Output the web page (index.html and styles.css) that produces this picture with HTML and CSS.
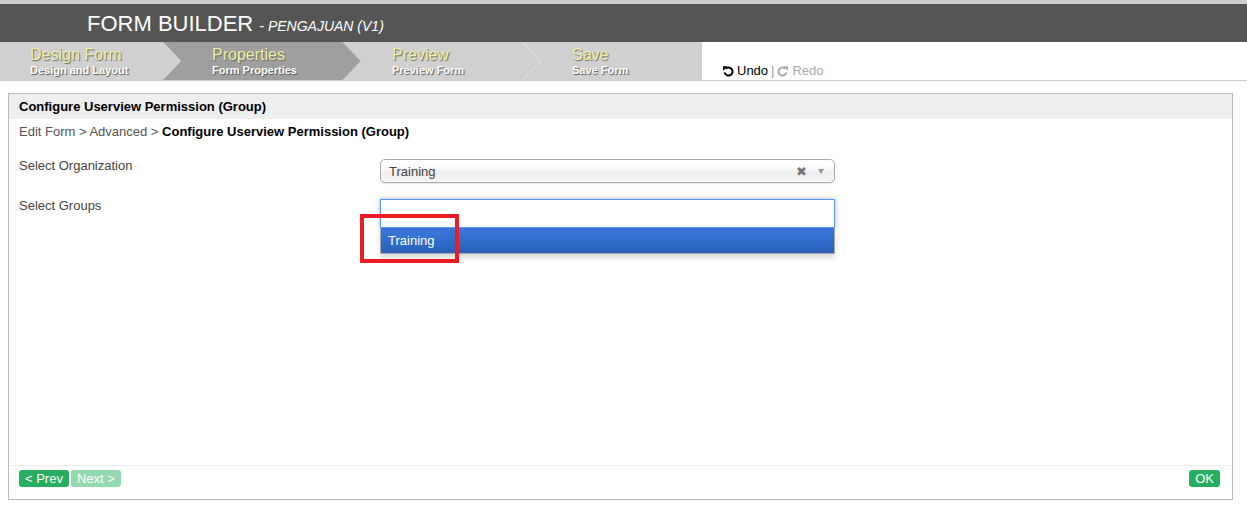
FILE: index.html
```html
<!DOCTYPE html>
<html>
<head>
<meta charset="utf-8">
<link rel="stylesheet" href="styles.css">
</head>
<body>
<header class="topbar">
  <h1 class="title">FORM BUILDER <span class="subtitle">- PENGAJUAN (V1)</span></h1>
</header>
<nav class="stepbar">
  <ul class="steps">
    <li class="step first"><span class="step-name">Design Form</span><span class="step-desc">Design and Layout</span></li>
    <li class="step active"><span class="step-name">Properties</span><span class="step-desc">Form Properties</span></li>
    <li class="step"><span class="step-name">Preview</span><span class="step-desc">Preview Form</span></li>
    <li class="step last"><span class="step-name">Save</span><span class="step-desc">Save Form</span></li>
  </ul>
  <div class="undo-redo">
    <span class="undo"><svg class="ico" viewBox="0 0 12 12"><path d="M3.7 3.7 A4 4 0 1 1 2.6 7.4" fill="none" stroke="currentColor" stroke-width="2"/><path d="M1 1.3 L5.6 1.3 L1 5.9 Z" fill="currentColor"/></svg>Undo</span>
    <span class="sep">|</span>
    <span class="redo"><svg class="ico" viewBox="0 0 12 12"><path d="M8.3 3.7 A4 4 0 1 0 9.4 7.4" fill="none" stroke="currentColor" stroke-width="2"/><path d="M11 1.3 L6.4 1.3 L11 5.9 Z" fill="currentColor"/></svg>Redo</span>
  </div>
</nav>
<main class="panel">
  <div class="panel-header">Configure Userview Permission (Group)</div>
  <div class="panel-body">
    <div class="breadcrumb">Edit Form &gt; Advanced &gt; <strong>Configure Userview Permission (Group)</strong></div>
    <div class="form-row">
      <label class="label">Select Organization</label>
      <div class="field">
        <div class="chosen-single">
          <span class="chosen-value">Training</span>
          <span class="chosen-clear">&#x2716;</span>
          <span class="chosen-arrow"></span>
        </div>
      </div>
    </div>
    <div class="form-row">
      <label class="label">Select Groups</label>
      <div class="field">
        <div class="chosen-multi">
          <div class="chosen-input"></div>
          <ul class="chosen-drop">
            <li class="chosen-option">Training</li>
          </ul>
          <div class="annotation"></div>
        </div>
      </div>
    </div>
  </div>
  <div class="panel-footer">
    <div class="nav-buttons">
      <button class="btn">&lt; Prev</button>
      <button class="btn disabled">Next &gt;</button>
    </div>
    <button class="btn">OK</button>
  </div>
</main>
</body>
</html>
```
FILE: styles.css
```css
* { box-sizing: border-box; }
html, body { margin: 0; padding: 0; background: #fff; }
body {
  font-family: "Liberation Sans", Arial, sans-serif;
  font-size: 13px;
  color: #333;
  width: 1247px;
  height: 506px;
  overflow: hidden;
}
.topbar {
  height: 42px;
  background: #555555;
  border-top: 4px solid #cfcfcf;
  padding-left: 87px;
  display: flex;
  align-items: center;
}
.title {
  margin: 0;
  font-weight: normal;
  font-size: 22px;
  color: #fff;
  line-height: 1;
  padding-top: 1px;
}
.subtitle {
  font-size: 14px;
  font-style: italic;
}
.stepbar {
  display: flex;
  height: 39px;
  border-bottom: 1px solid #cccccc;
}
.steps {
  display: flex;
  margin: 0;
  padding: 0;
  list-style: none;
  height: 38px;
}
.step {
  position: relative;
  width: 180px;
  height: 38px;
  background: #d0d0d0;
  padding-left: 50px;
  padding-top: 5px;
  display: flex;
  flex-direction: column;
}
.step.first { width: 162px; padding-left: 30px; }
.step.last { width: 180px; }
.step::before, .step::after {
  content: "";
  position: absolute;
  top: 0;
  left: 100%;
  width: 18px;
  height: 38px;
  z-index: 1;
  clip-path: polygon(0 0, 100% 50%, 0 100%);
}
.step::before {
  left: calc(100% + 1px);
  background: #e2e2e2;
}
.step::after { background: #d0d0d0; }
.step.active { background: #9f9f9f; }
.step.active::after { background: #9f9f9f; }
.step.active::before { background: #b4b4b4; }
.step.first::before { background: #dcdcdc; }
.step.last::before, .step.last::after { display: none; }
.step-name {
  font-size: 16px;
  line-height: 16px;
  color: #eef0a6;
  text-shadow: 1px 1px 1px #666;
}
.step-desc {
  font-size: 11px;
  font-weight: bold;
  line-height: 14px;
  color: #fff;
  text-shadow: 1px 1px 1px #555;
}
.undo-redo {
  padding-left: 20px;
  padding-top: 19px;
  font-size: 13px;
  color: #000;
  display: flex;
  align-items: center;
  gap: 3px;
  height: 38px;
}
.ico { width: 12px; height: 12px; margin-right: 3px; }
.undo, .redo { display: inline-flex; align-items: center; }
.sep { color: #999; }
.redo { color: #aaa; }
.panel {
  margin: 12px 14px 0 8px;
  height: 407px;
  border: 1px solid #bbbbbb;
  display: flex;
  flex-direction: column;
}
.panel-header {
  background: #eeeeee;
  height: 25px;
  line-height: 25px;
  padding-left: 10px;
  font-weight: bold;
  color: #000;
}
.panel-body {
  flex: 1;
  padding: 5px 10px 0 10px;
}
.breadcrumb {
  line-height: 16px;
  color: #555;
  margin-bottom: 19px;
}
.breadcrumb strong { color: #000; }
.form-row {
  display: flex;
  height: 40px;
}
.label {
  width: 361px;
  color: #444;
  line-height: 16px;
  margin-top: -1px;
}
.field { width: 455px; }
.chosen-single {
  height: 24px;
  border: 1px solid #aaa;
  border-radius: 5px;
  background: linear-gradient(#fff 20%, #f6f6f6 50%, #eee 52%, #f4f4f4 100%);
  box-shadow: inset 0 0 3px #fff, 0 1px 1px rgba(0,0,0,0.1);
  display: flex;
  align-items: center;
  padding-left: 8px;
  color: #444;
}
.chosen-value { flex: 1; }
.chosen-clear { font-size: 13px; color: #777; margin-right: 11px; }
.chosen-arrow {
  width: 0; height: 0;
  border-left: 3px solid transparent;
  border-right: 3px solid transparent;
  border-top: 5px solid #999;
  margin-right: 10px;
}
.chosen-multi { position: relative; }
.chosen-input {
  height: 29px;
  border: 1px solid #5897fb;
  box-shadow: 0 0 5px rgba(0,0,0,0.3);
  background: #fff;
}
.chosen-drop {
  margin: 0;
  padding: 0;
  list-style: none;
  border: 1px solid #aaa;
  border-top: 0;
  box-shadow: 0 4px 5px rgba(0,0,0,0.15);
  background: #fff;
}
.chosen-option {
  height: 25px;
  line-height: 25px;
  padding-left: 7px;
  color: #fff;
  background: linear-gradient(#3875d7 20%, #2a62bc 90%);
}
.annotation {
  position: absolute;
  left: -20px;
  top: 15px;
  width: 99px;
  height: 49px;
  border: 4px solid #ed1c24;
}
.panel-footer {
  border-top: 1px solid #eeeeee;
  height: 34px;
  display: flex;
  justify-content: space-between;
  align-items: flex-start;
  padding: 4px 12px 0 10px;
}
.nav-buttons { display: flex; gap: 2px; }
.btn {
  font-family: "Liberation Sans", Arial, sans-serif;
  font-size: 13px;
  color: #fff;
  background: #27ae60;
  border: 0;
  border-radius: 3px;
  height: 17px;
  line-height: 17px;
  padding: 0 6px;
  margin: 0;
}
.btn.disabled { background: #93d9b0; }
```
